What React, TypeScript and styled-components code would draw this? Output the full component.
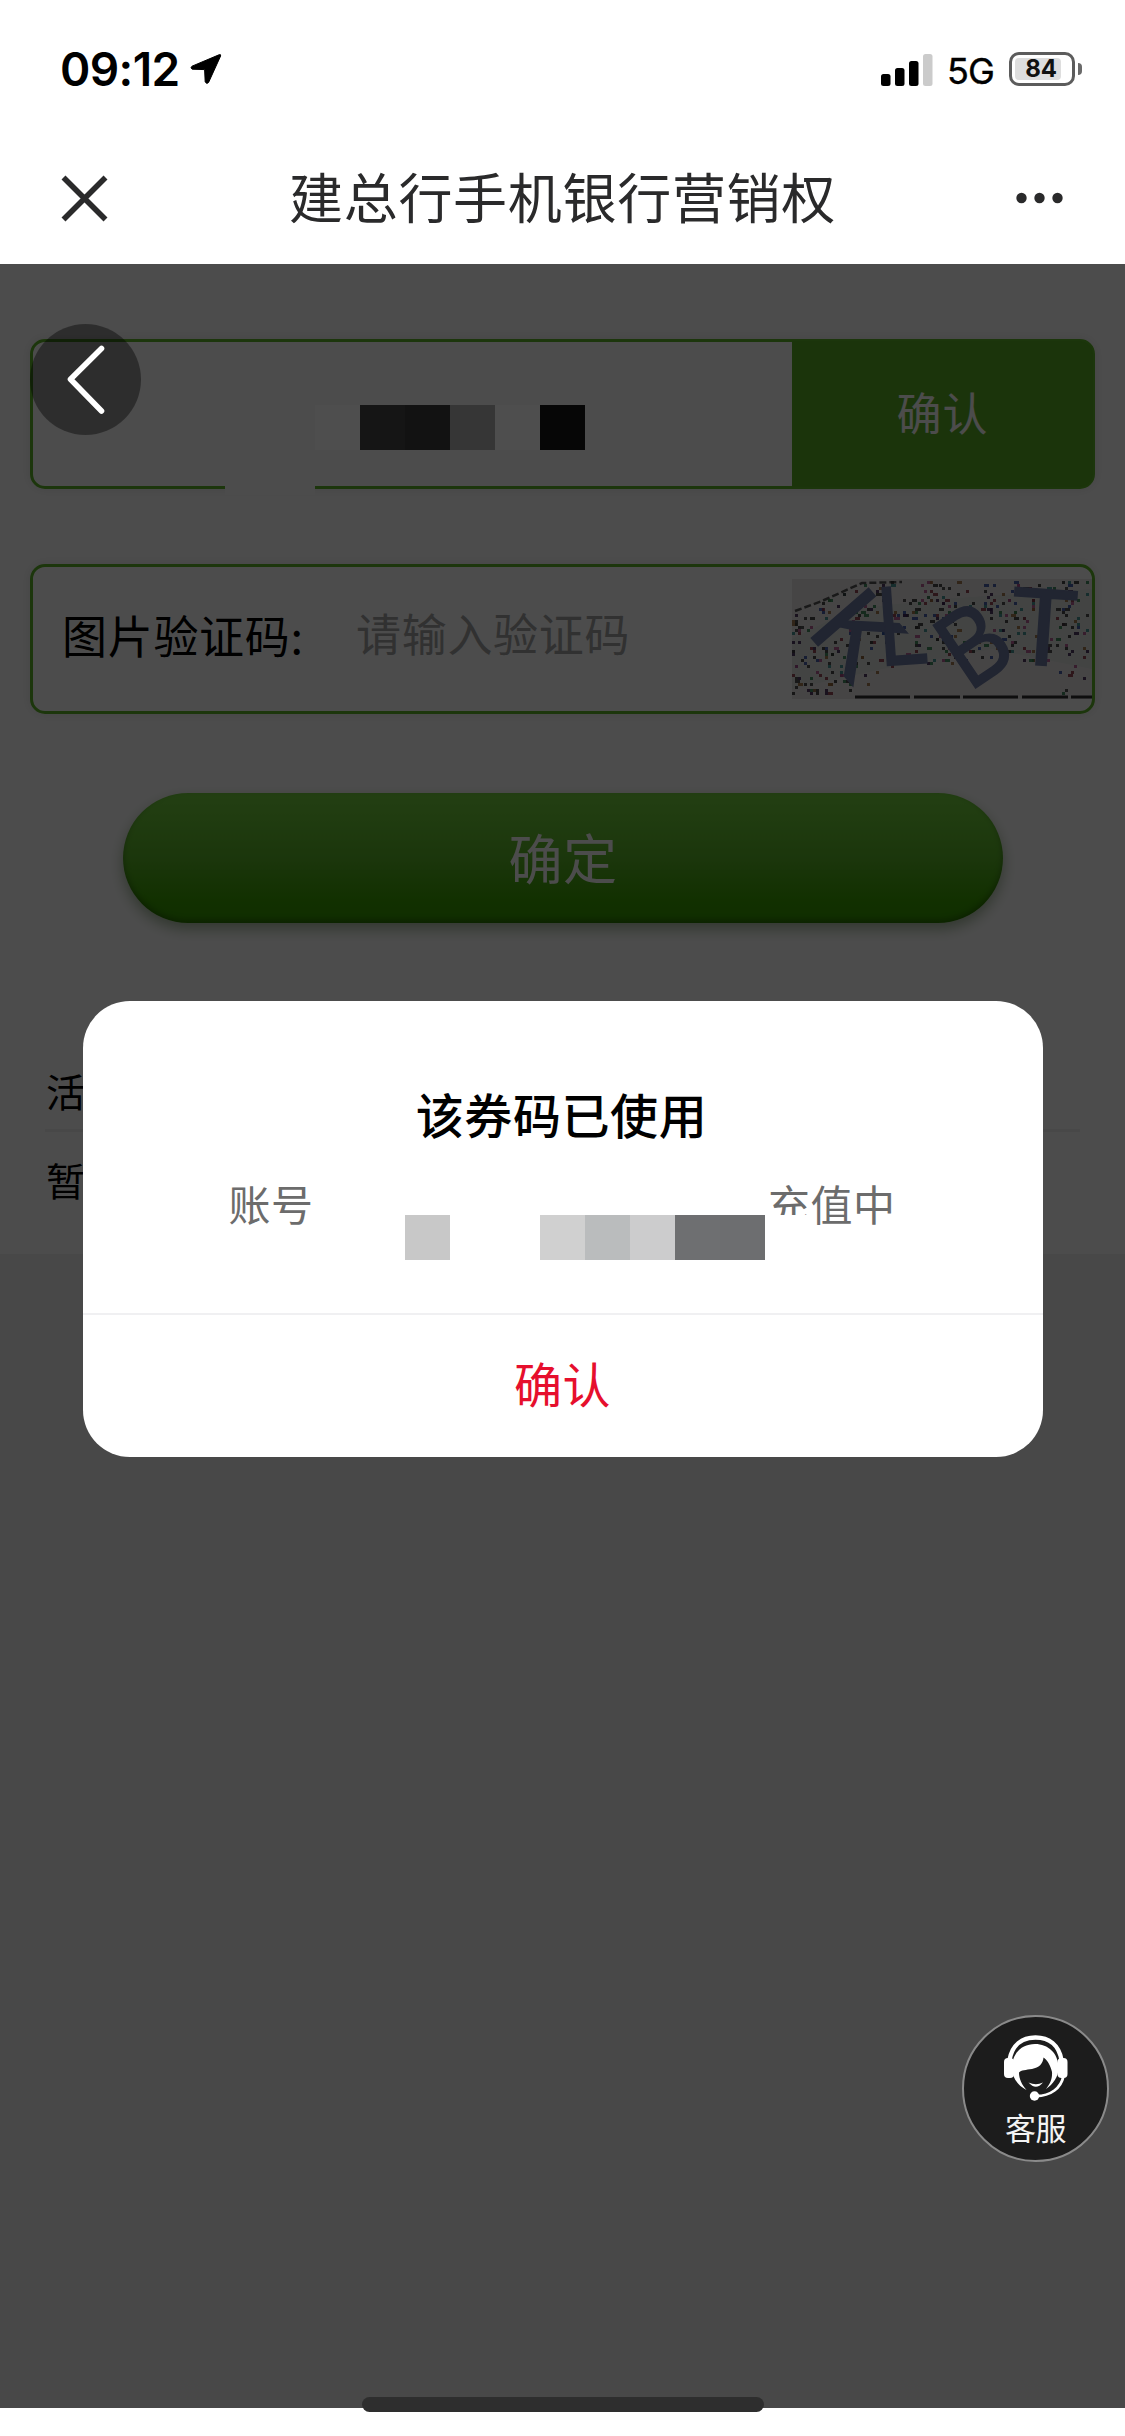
import React from 'react';
import styled, { createGlobalStyle } from 'styled-components';

const CJK = `"Noto Sans CJK SC", "Noto Sans", sans-serif`;

const GlobalStyle = createGlobalStyle`
  * { box-sizing: border-box; }
  html, body { margin: 0; padding: 0; background: #fff; }
  body { font-family: ${CJK}; }
  button { font: inherit; border: 0; padding: 0; background: none; }
`;

const Screen = styled.div`
  display: flex;
  flex-direction: column;
  width: 1125px;
  height: 2436px;
  background: #fff;
  overflow: hidden;
`;

/* ---------- status bar ---------- */
const StatusBar = styled.header`
  display: flex;
  align-items: center;
  justify-content: space-between;
  height: 138px;
  padding: 0 43px 0 60px;
`;

const StatusGroup = styled.div<{ $gap: number }>`
  display: flex;
  align-items: center;
  gap: ${(p) => p.$gap}px;
`;

const Clock = styled.span`
  font: 600 46px/56px Inter, sans-serif;
  letter-spacing: -0.6px;
  color: #000;
`;

const Network = styled.span`
  width: 46px;
  font: 400 36px/44px Inter, sans-serif;
  letter-spacing: -1px;
  color: #000;
  -webkit-text-stroke: 0.4px #000;
  transform: translate(-1px, 2px);
`;

const Battery = styled.div`
  display: flex;
  align-items: center;
  gap: 3px;
`;

const BatteryBody = styled.div`
  width: 66px;
  height: 34px;
  padding: 3px;
  border: 3px solid #5c5c5c;
  border-radius: 10px;
`;

const BatteryLevel = styled.div`
  display: flex;
  align-items: center;
  justify-content: flex-end;
  width: 46px;
  height: 22px;
  padding-right: 4px;
  border-radius: 4px;
  background: #dedede;
  font: 700 24px/22px Inter, sans-serif;
  color: #111;
`;

const BatteryTip = styled.div`
  width: 4px;
  height: 12px;
  border-radius: 0 6px 6px 0;
  background: #6a6a6a;
`;

/* ---------- nav bar ---------- */
const NavBar = styled.nav`
  display: grid;
  grid-template-columns: 110px 1fr 110px;
  align-items: center;
  height: 126px;
  padding-bottom: 6px;
  color: #2a2a2b;
`;

const NavSlot = styled.div<{ $end?: boolean }>`
  display: flex;
  justify-content: ${(p) => (p.$end ? 'flex-end' : 'flex-start')};
  padding: ${(p) => (p.$end ? '0 62px 0 0' : '0 0 0 61px')};
`;

const NavTitle = styled.h1`
  margin: -5px 0 0;
  font-size: 54px;
  font-weight: 400;
  line-height: 80px;
  letter-spacing: 0.7px;
  text-align: center;
`;

/* ---------- page ---------- */
const Page = styled.main`
  position: relative;
  height: 2144px;
  background: #f0f0f0;
`;

const Content = styled.section`
  display: flex;
  flex-direction: column;
  height: 990px;
  padding: 75px 30px 0;
  background: #fff;
`;

const Field = styled.div`
  display: flex;
  align-items: center;
  flex: none;
  height: 150px;
  margin-bottom: 75px;
  border: 3px solid #5fb528;
  border-radius: 15px;
  box-shadow: 0 0 12px rgba(0, 0, 0, 0.1);
`;

const FieldButton = styled.button`
  width: 300px;
  height: 144px;
  margin-left: auto;
  padding: 0 0 5px 1px;
  border-radius: 0 12px 12px 0;
  background: #5ab025;
  box-shadow: 0 0 0 1px #5ab025;
  clip-path: inset(-1px -1px -1px 0);
  color: #fff;
  font-size: 45px;
  letter-spacing: 0.9px;
`;

const FieldLabel = styled.span`
  width: 294px;
  padding-left: 29px;
  font-size: 45px;
  letter-spacing: 0.7px;
  line-height: 66px;
  color: #000;
  white-space: nowrap;
  transform: translateY(-4px);
`;

const Placeholder = styled.span`
  flex: 1;
  padding-left: 29px;
  font-size: 45px;
  letter-spacing: 0.7px;
  line-height: 66px;
  color: #a4a4a4;
  transform: translateY(-6px);
`;

const SubmitButton = styled.button`
  flex: none;
  align-self: center;
  width: 880px;
  height: 130px;
  margin: 4px 0 0 1px;
  padding-bottom: 4px;
  border-radius: 65px;
  background: linear-gradient(#76d440, #5cb628 50%, #3aa000 85%, #389c00);
  box-shadow: 0 6px 14px rgba(30, 80, 10, 0.4), inset 0 -3px 6px rgba(0, 0, 0, 0.3);
  color: #fff;
  font-size: 54px;
  letter-spacing: 0.4px;
`;

const RecordList = styled.div`
  display: flex;
  flex-direction: column;
  margin: 125px 15px 0;
`;

const RecordRow = styled.div`
  height: 81px;
  padding-left: 1px;
  font-size: 39px;
  line-height: 84px;
  color: #000;

  & + & {
    height: 100px;
    border-top: 3px solid #f0f0f0;
    line-height: 95px;
  }
`;

const Mask = styled.div`
  position: absolute;
  inset: 0;
  display: flex;
  align-items: flex-start;
  justify-content: center;
  padding-top: 737px;
  background: rgba(0, 0, 0, 0.7);
`;

/* ---------- dialog ---------- */
const Dialog = styled.div`
  display: flex;
  flex-direction: column;
  width: 960px;
  height: 456px;
  border-radius: 47px;
  background: #fff;
`;

const DialogBody = styled.div`
  position: relative;
  flex: 1;
  padding-top: 77px;
`;

const DialogTitle = styled.h2`
  margin: 0;
  font-size: 48px;
  font-weight: 500;
  line-height: 70px;
  letter-spacing: 0.6px;
  text-align: center;
  text-indent: -2px;
  color: #000;
`;

const DialogMessage = styled.div`
  display: flex;
  justify-content: space-between;
  margin: 24px 147px 0 146px;
  font-size: 42px;
  line-height: 62px;
  letter-spacing: 0.5px;
  color: #6c6c6c;
`;

const Clipped = styled.span`
  display: inline-block;
  height: 43px;
  overflow: hidden;
  vertical-align: top;
`;

const DialogAction = styled.button`
  height: 144px;
  padding-bottom: 8px;
  border-top: 2px solid #f0f0f2;
  color: #e60f2d;
  font-size: 48px;
  letter-spacing: 0.5px;
`;

/* ---------- floating pieces ---------- */
const Mosaic = styled.div<{ $x: number; $y: number }>`
  position: absolute;
  left: ${(p) => p.$x}px;
  top: ${(p) => p.$y}px;
  display: flex;
`;

const MosaicCell = styled.i<{ $color: string }>`
  width: 45px;
  height: 45px;
  background: ${(p) => p.$color};
`;

const BackButton = styled.button`
  position: absolute;
  left: 30px;
  top: 60px;
  display: grid;
  place-items: center;
  width: 111px;
  height: 111px;
  border-radius: 50%;
  background: rgba(0, 0, 0, 0.4);
`;

const ServiceButton = styled.button`
  position: absolute;
  left: 962px;
  top: 1751px;
  display: flex;
  flex-direction: column;
  align-items: center;
  width: 147px;
  height: 147px;
  padding-top: 18px;
  border: 2px solid #8a8a8a;
  border-radius: 50%;
  background: #1c1c1c;
  color: #f4f4f4;
  font-size: 31px;
  line-height: 40px;
`;

const ServiceLabel = styled.span`
  margin-top: 5px;
  letter-spacing: -0.5px;
`;

const HomeIndicator = styled.div`
  position: absolute;
  left: 362px;
  bottom: -4px;
  width: 402px;
  height: 15px;
  border-radius: 8px;
  background: #2e2e2e;
`;

/* ---------- drawings ---------- */
const LocationArrow = () => (
  <svg width="32" height="32" viewBox="0 0 32 32">
    <path d="M29.5 1.6 L2 13.2 Q0 14.8 2.2 16.2 L14.6 16.6 L15.2 29 Q16.8 31.6 18.6 29.4 L30.6 3 Q31 1.2 29.5 1.6Z" fill="#000" stroke="#000" strokeWidth="1" />
  </svg>
);

const Signal = () => (
  <svg width="52" height="33" viewBox="0 0 52 33">
    <rect x="0" y="21" width="9.5" height="12" rx="2.5" />
    <rect x="14" y="15" width="9.5" height="18" rx="2.5" />
    <rect x="28" y="8" width="9.5" height="25" rx="2.5" />
    <rect x="42" y="1" width="9.5" height="32" rx="2.5" fill="#cbcbcb" />
  </svg>
);

const CloseIcon = () => (
  <svg width="47" height="47" viewBox="0 0 47 47" stroke="currentColor" strokeWidth="5.6">
    <path d="M2.5 2.5 L44.5 44.5 M44.5 2.5 L2.5 44.5" />
  </svg>
);

const MoreIcon = () => (
  <svg width="47" height="12" viewBox="0 0 47 12" fill="currentColor">
    <circle cx="5.5" cy="6" r="5.2" />
    <circle cx="23.5" cy="6" r="5.2" />
    <circle cx="41.5" cy="6" r="5.2" />
  </svg>
);

const BackIcon = () => (
  <svg width="111" height="111" viewBox="0 0 111 111" fill="none" stroke="#fff" strokeWidth="5.6" strokeLinecap="round" strokeLinejoin="round">
    <path d="M71.5 24.5 L40.5 55.3 L71.5 87" />
  </svg>
);

const HeadsetIcon = () => (
  <svg width="64" height="67" viewBox="0 0 64 67" fill="#fff">
    <path d="M5.5 25 C8 10 18 2.5 31.5 2.5 S55 10 57.5 25" fill="none" stroke="#fff" strokeWidth="4.4" />
    <rect x="0" y="23" width="10" height="20" rx="4" />
    <rect x="53.5" y="23" width="10" height="20" rx="4" />
    <path d="M8 33 C8 18 18 9 31 9 S54.5 18 54.5 33 C54.5 42 49 49 42 54 C46 49 48.5 44 48 37 C46.5 30 43 25 39.5 22.5 C39 29 35 32.5 28 34 C22 35 17 35 15 37.5 C15 44 18 50 22.5 55 C13 50 8 42 8 33Z" />
    <path d="M24.5 47.5 Q32 51 39 47.5 Q32 56 24.5 47.5Z" />
    <path d="M59.5 41 C57 53 47 61 32 61" fill="none" stroke="#fff" strokeWidth="2.8" />
    <circle cx="30.5" cy="61" r="4.7" />
  </svg>
);

const CaptchaImage = styled.svg`
  display: block;
  flex: none;
  overflow: visible;
`;

const makeNoise = () => {
  let seed = 41;
  const next = () => {
    seed = (seed * 16807) % 2147483647;
    return seed / 2147483647;
  };
  const palette = ['#303030', '#303030', '#3a3a3a', '#3a2050', '#8a3040', '#2d7e4c', '#304aa0', '#b04a88', '#9a6a3a', '#308a8a'];
  const dots: { x: number; y: number; w: number; fill: string }[] = [];
  while (dots.length < 430) {
    const x = Math.floor(next() * 99) * 3;
    const y = Math.floor(next() * 38) * 3 + 2;
    const w = next() > 0.85 ? 5 : 3;
    const fill = palette[Math.floor(next() * palette.length)];
    if (y < 36 - x * 0.45) continue;
    if (x > 85 && x < 225 && y > 92 - (x - 85) * 0.12) continue;
    if (x >= 225 && x < 250 && y > 84) continue;
    if (x >= 250 && y > 84 + (x - 250) * 0.1 && next() > 0.35) continue;
    dots.push({ x, y, w, fill });
  }
  return dots;
};
const NOISE = makeNoise();

const Captcha = () => (
  <CaptchaImage width="300" height="120" viewBox="0 0 300 120">
    <rect width="300" height="120" fill="#ebe7e8" />
    <path d="M0 60 L60 30 L150 20 L300 10 L300 90 L200 70 L90 90 L0 110Z" fill="#dfe4e1" />
    <path d="M3 32 L30 22 L70 4 L110 3" fill="none" stroke="#555" strokeWidth="2.5" strokeDasharray="7 3" />
    {NOISE.map((d, i) => (
      <rect key={i} x={d.x} y={d.y} width={d.w} height="3" fill={d.fill} opacity="0.85" />
    ))}
    <g fill="#6f7ca4" stroke="#6f7ca4" strokeWidth="1.5" fontFamily="Liberation Sans, Arial, sans-serif" fontSize="110">
      <text transform="translate(22 62) rotate(49) translate(-13 0)">K</text>
      <text transform="translate(101 86) rotate(-4) translate(-13 0) scale(0.82 1.03)">L</text>
      <text transform="translate(188 106) rotate(-34) translate(-13 0) scale(0.84 1)">B</text>
      <text transform="translate(249 86) rotate(4)" textAnchor="middle">T</text>
    </g>
    <path d="M63 118 H300" stroke="#303030" strokeWidth="3" strokeDasharray="55 4 46 3" />
  </CaptchaImage>
);

export default function App() {
  return (
    <Screen>
      <GlobalStyle />
      <StatusBar>
        <StatusGroup $gap={10}>
          <Clock>09:12</Clock>
          <LocationArrow />
        </StatusGroup>
        <StatusGroup $gap={15}>
          <Signal />
          <Network>5G</Network>
          <Battery>
            <BatteryBody>
              <BatteryLevel>84</BatteryLevel>
            </BatteryBody>
            <BatteryTip />
          </Battery>
        </StatusGroup>
      </StatusBar>

      <NavBar>
        <NavSlot>
          <CloseIcon />
        </NavSlot>
        <NavTitle>建总行手机银行营销权</NavTitle>
        <NavSlot $end>
          <MoreIcon />
        </NavSlot>
      </NavBar>

      <Page>
        <Content>
          <Field>
            <FieldButton>确认</FieldButton>
          </Field>
          <Field>
            <FieldLabel>图片验证码:</FieldLabel>
            <Placeholder>请输入验证码</Placeholder>
            <Captcha />
          </Field>
          <SubmitButton>确定</SubmitButton>
          <RecordList>
            <RecordRow>活</RecordRow>
            <RecordRow>暂</RecordRow>
          </RecordList>
        </Content>

        <Mask>
          <Dialog>
            <DialogBody>
              <DialogTitle>该券码已使用</DialogTitle>
              <DialogMessage>
                <span>账号</span>
                <span>
                  <Clipped>充</Clipped>值中
                </span>
              </DialogMessage>
              <Mosaic $x={322} $y={214}>
                {['#c8c8c8', '#fff', '#fff', '#d0d0d0', '#babcbd', '#cccccd', '#6e6f71', '#6d6e70'].map((c, i) => (
                  <MosaicCell key={i} $color={c} />
                ))}
              </Mosaic>
            </DialogBody>
            <DialogAction>确认</DialogAction>
          </Dialog>
        </Mask>

        <Mosaic $x={315} $y={141}>
          {['#4e4e4e', '#151515', '#121212', '#363636', '#4e4e4e', '#060606'].map((c, i) => (
            <MosaicCell key={i} $color={c} />
          ))}
        </Mosaic>
        <Mosaic $x={225} $y={186}>
          <MosaicCell $color="#4c4c4c" />
          <MosaicCell $color="#4c4c4c" />
        </Mosaic>

        <BackButton aria-label="返回">
          <BackIcon />
        </BackButton>
        <ServiceButton>
          <HeadsetIcon />
          <ServiceLabel>客服</ServiceLabel>
        </ServiceButton>
        <HomeIndicator />
      </Page>
    </Screen>
  );
}
